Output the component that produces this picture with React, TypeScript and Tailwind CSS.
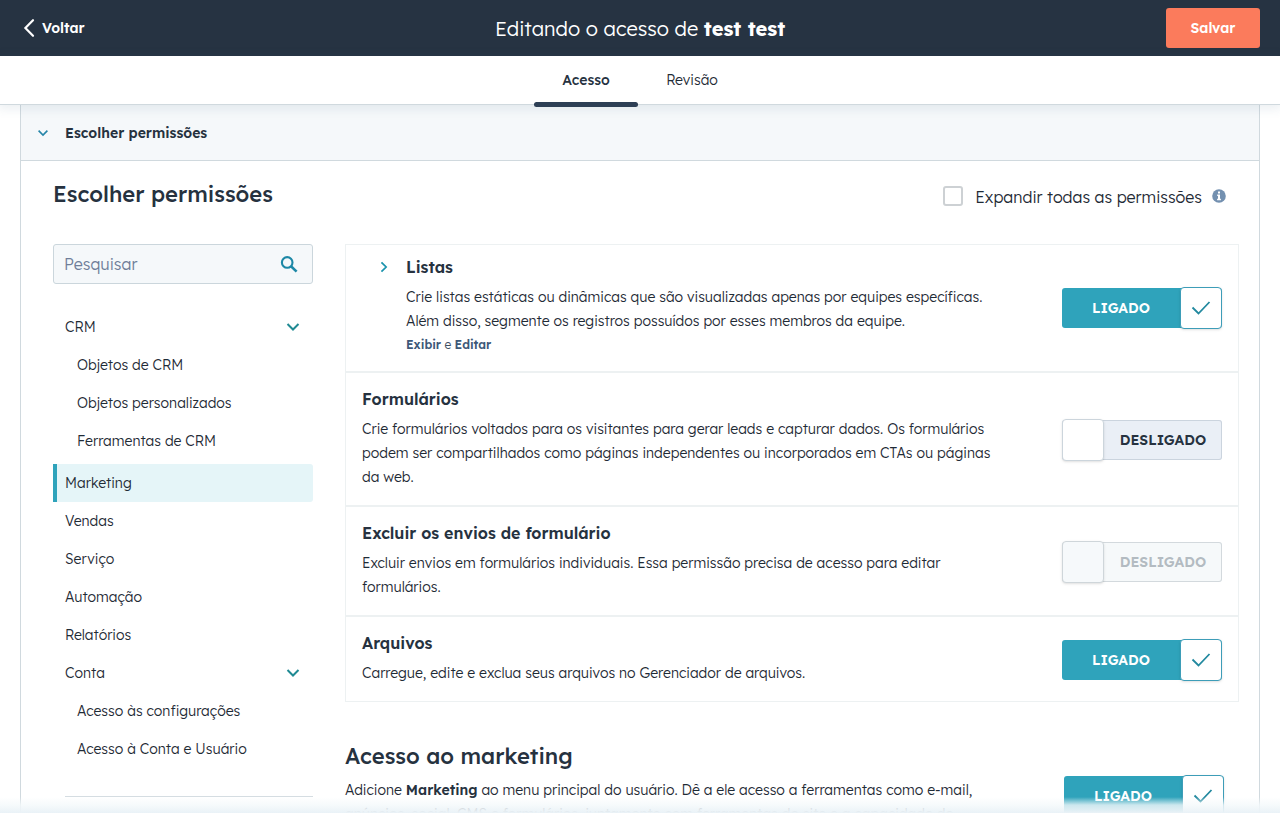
import { useState } from "react";
import type { ReactNode } from "react";

type ToggleState = "on" | "off" | "disabled";

function Check() {
  return (
    <svg viewBox="0 0 20 16" className="h-4 w-5" fill="none" stroke="currentColor" strokeWidth="1.8" aria-hidden="true">
      <path d="M1.5 7.5 L7.5 13.5 L18.5 2" />
    </svg>
  );
}

function Chevron({ className, strokeWidth = 2 }: { className: string; strokeWidth?: number }) {
  return (
    <svg viewBox="0 0 14 10" className={className} fill="none" stroke="currentColor" strokeWidth={strokeWidth} aria-hidden="true">
      <path d="M1.5 2 L7 7.5 L12.5 2" />
    </svg>
  );
}

function Toggle({ initial, label }: { initial: ToggleState; label: string }) {
  const [on, setOn] = useState(initial === "on");
  const disabled = initial === "disabled";

  if (on) {
    return (
      <button
        type="button"
        role="switch"
        aria-checked="true"
        aria-label={label}
        onClick={() => setOn(false)}
        className="mt-1 flex h-10 w-40 shrink-0 items-center rounded-[3px] bg-[#2fa3bb] text-sm font-semibold text-white"
      >
        <span className="flex-1 text-center">LIGADO</span>
        <span className="-my-px flex h-[42px] w-[42px] items-center justify-center rounded border border-[#3d9db8] bg-white text-[#22899f] shadow-sm">
          <Check />
        </span>
      </button>
    );
  }
  return (
    <button
      type="button"
      role="switch"
      aria-checked="false"
      aria-label={label}
      disabled={disabled}
      onClick={() => setOn(true)}
      className={
        disabled
          ? "mt-1 flex h-10 w-40 shrink-0 items-center rounded-[3px] bg-[#f6f9fa] text-sm font-semibold text-[#b3bbc1] inset-ring inset-ring-[#d3d9dd]"
          : "mt-1 flex h-10 w-40 shrink-0 items-center rounded-[3px] bg-[#eaeff6] text-sm font-semibold text-[#26323f] inset-ring inset-ring-[#cbd4de]"
      }
    >
      <span
        className={
          disabled
            ? "-my-px h-[42px] w-[42px] rounded border border-[#cfd6da] bg-[#f6f9fb] shadow-sm"
            : "-my-px h-[42px] w-[42px] rounded border border-[#ccd5dc] bg-white shadow-sm"
        }
      />
      <span className="flex-1 text-center">DESLIGADO</span>
    </button>
  );
}

type NavItem = { label: string; child?: boolean; group?: boolean; active?: boolean };

const navItems: NavItem[] = [
  { label: "CRM", group: true },
  { label: "Objetos de CRM", child: true },
  { label: "Objetos personalizados", child: true },
  { label: "Ferramentas de CRM", child: true },
  { label: "Marketing", active: true },
  { label: "Vendas" },
  { label: "Serviço" },
  { label: "Automação" },
  { label: "Relatórios" },
  { label: "Conta", group: true },
  { label: "Acesso às configurações", child: true },
  { label: "Acesso à Conta e Usuário", child: true },
];

function navClass(item: NavItem) {
  if (item.active) return "mt-1 flex h-[38px] items-center rounded-r-[3px] border-l-4 border-[#2fa3bb] bg-[#e5f5f8] pl-2";
  if (item.child) return "flex h-[38px] items-center pl-6";
  return "flex h-[38px] items-center justify-between pl-3 pr-3";
}

function Sidebar() {
  return (
    <aside className="w-[260px] shrink-0">
      <label className="flex h-10 items-center rounded-[3px] border border-[#cbd6dc] bg-[#f5f8fa] pr-[13px] pl-2.5">
        <input
          type="search"
          aria-label="Pesquisar"
          placeholder="Pesquisar"
          className="min-w-0 flex-1 bg-transparent text-base font-light outline-none placeholder:text-[#6f7e99]"
        />
        <svg viewBox="0 0 20 20" className="size-5" fill="none" stroke="#1d88a6" aria-hidden="true">
          <circle cx="8.2" cy="8.4" r="5.3" strokeWidth="2.1" />
          <path d="M12 12.3 L17.6 17.6" strokeWidth="2.6" />
        </svg>
      </label>
      <nav className="mt-6 text-sm font-light text-[#1f2b36]">
        <ul>
          {navItems.map((item) => (
            <li key={item.label}>
              <a href="#" className={navClass(item)}>
                {item.label}
                {item.group && <Chevron className="h-[10px] w-4 text-[#1f8a93]" />}
              </a>
            </li>
          ))}
        </ul>
      </nav>
      <hr className="mt-7 ml-3 border-[#d5dde2]" />
    </aside>
  );
}

function Permission({ title, state, children }: { title: string; state: ToggleState; children: ReactNode }) {
  return (
    <li className="flex items-center justify-between border-t-2 border-[#edf1f2] pt-3.5 pr-4 pb-4 pl-4">
      <div className="max-w-[634px]">
        <h3 className="text-base leading-6 font-semibold text-[#26323f]">{title}</h3>
        <p className="mt-1.5 text-sm leading-6 font-light text-[#1f2b36]">{children}</p>
      </div>
      <Toggle initial={state} label={title} />
    </li>
  );
}

export default function App() {
  return (
    <div className="relative flex h-screen flex-col overflow-hidden bg-white font-['Lexend_Deca','Lexend','Inter',sans-serif] text-[#26323f]">
      <header className="grid h-14 shrink-0 grid-cols-[1fr_auto_1fr] items-center bg-[#263342] px-5 text-white">
        <a href="#" className="flex items-center gap-1.5 justify-self-start text-sm font-semibold">
          <svg viewBox="0 0 16 20" className="h-5 w-4" fill="none" stroke="currentColor" strokeWidth="2.2" strokeLinecap="round" aria-hidden="true">
            <path d="M13 2.2 L5.4 10 L13 17.8" />
          </svg>
          Voltar
        </a>
        <h1 className="pt-0.5 text-xl font-light">
          Editando o acesso de <strong className="font-bold">test test</strong>
        </h1>
        <button type="button" className="h-10 w-[94px] justify-self-end rounded-[3px] bg-[#fb7b5c] text-sm font-semibold">
          Salvar
        </button>
      </header>

      <nav className="z-10 flex h-[49px] shrink-0 justify-center border-b border-[#d0d9de] bg-white text-sm shadow-[0_2px_10px_2px_rgba(60,95,125,0.10)]">
        <a href="#" className="-mb-[3px] flex w-[104px] flex-col items-center justify-between pt-3.5 font-medium text-[#26323f]">
          Acesso
          <span className="h-[5px] w-full rounded-full bg-[#2d3f55]" />
        </a>
        <a href="#" className="flex w-[108px] justify-center pt-3.5 font-light text-[#1f2b36]">
          Revisão
        </a>
      </nav>

      <main className="min-h-0 flex-1 overflow-y-auto px-5 [scrollbar-width:none]">
        <section className="border-x border-[#d0d9de]">
          <button
            type="button"
            className="flex h-14 w-full items-center gap-4 border-b border-[#d0d9de] bg-[#f5f8fa] pl-4 text-sm font-semibold"
          >
            <Chevron className="h-2 w-3 text-[#2585a8]" />
            Escolher permissões
          </button>

          <div className="pr-5 pl-8">
            <div className="flex items-center justify-between pt-[15px] pr-[13px]">
              <h2 className="text-[22px] leading-9 font-medium">Escolher permissões</h2>
              <div className="flex items-center pt-1 text-base">
                <input
                  id="expand-all"
                  type="checkbox"
                  className="size-5 appearance-none rounded-[3px] border-2 border-[#cdd1d4] bg-white checked:bg-[#2fa3bb]"
                />
                <label htmlFor="expand-all" className="pt-0.5 pl-3 font-light text-[#1f2b36]">
                  Expandir todas as permissões
                </label>
                <svg viewBox="0 0 14 14" className="ml-2.5 size-3.5" aria-hidden="true">
                  <circle cx="7" cy="7" r="6.8" fill="#7390b0" />
                  <path d="M6 2.6 H8 V4.6 H6 Z M5.2 5.6 H8 V9.8 H8.9 V11.3 H5.1 V9.8 H6 V7 H5.2 Z" fill="#fff" />
                </svg>
              </div>
            </div>

            <div className="mt-8 flex gap-8">
              <Sidebar />
              <div className="min-w-0 flex-1">
                <ul className="border border-[#edf1f2]">
                  <li className="flex items-center justify-between pt-2.5 pr-4 pb-3.5 pl-8">
                    <div className="flex max-w-[640px] items-start">
                      <button type="button" aria-label="Expandir Listas" className="flex h-6 w-7 shrink-0 items-center">
                        <Chevron className="h-2.5 w-3 -rotate-90 text-[#1a93ad]" />
                      </button>
                      <div>
                        <h3 className="text-base leading-6 font-semibold">Listas</h3>
                        <p className="mt-1.5 text-sm leading-6 font-light text-[#1f2b36]">
                          Crie listas estáticas ou dinâmicas que são visualizadas apenas por equipes específicas. Além disso, segmente os
                          registros possuídos por esses membros da equipe.
                        </p>
                        <p className="text-xs leading-6 font-light text-[#3f5063]">
                          <strong className="font-semibold text-[#3d5878]">Exibir</strong> e{" "}
                          <strong className="font-semibold text-[#3d5878]">Editar</strong>
                        </p>
                      </div>
                    </div>
                    <Toggle initial="on" label="Listas" />
                  </li>
                  <Permission title="Formulários" state="off">
                    Crie formulários voltados para os visitantes para gerar leads e capturar dados. Os formulários podem ser compartilhados como
                    páginas independentes ou incorporados em CTAs ou páginas da web.
                  </Permission>
                  <Permission title="Excluir os envios de formulário" state="disabled">
                    Excluir envios em formulários individuais. Essa permissão precisa de acesso para editar formulários.
                  </Permission>
                  <Permission title="Arquivos" state="on">
                    Carregue, edite e exclua seus arquivos no Gerenciador de arquivos.
                  </Permission>
                </ul>

                <div className="mt-9 flex items-center justify-between pr-[15px]">
                  <div className="max-w-[640px]">
                    <h2 className="text-[22px] leading-9 font-medium">Acesso ao marketing</h2>
                    <p className="mt-1 text-sm leading-6 font-light text-[#1f2b36]">
                      Adicione <strong className="font-semibold text-[#26323f]">Marketing</strong> ao menu principal do usuário. Dê a ele
                      acesso a ferramentas como e-mail, anúncios, social, CMS e formulários, juntamente com ferramentas do site e a capacidade de
                    </p>
                  </div>
                  <div className="pt-6">
                    <Toggle initial="on" label="Acesso ao marketing" />
                  </div>
                </div>
              </div>
            </div>
          </div>
        </section>
      </main>
      <div className="pointer-events-none absolute inset-x-0 bottom-0 h-4 bg-linear-to-t from-[#eaf2f7] via-[#f4f9fb]/80 to-transparent" />
    </div>
  );
}
